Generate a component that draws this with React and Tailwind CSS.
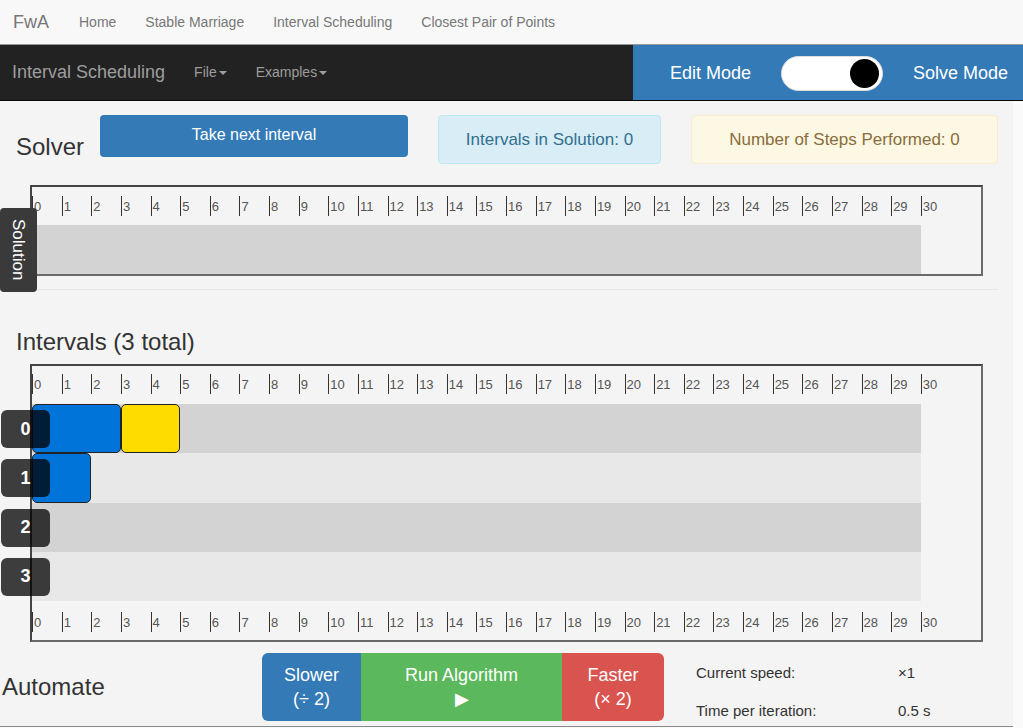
import React from "react";

const UNIT = 889 / 30;
const TICKS = Array.from({ length: 31 }, (_, i) => i);

// intervals per row: [start, end, colour]
const ROWS = [
  [
    [0, 3, "bg-[#0074d9]"],
    [3, 5, "bg-[#ffdc00]"],
  ],
  [[0, 2, "bg-[#0074d9]"]],
  [],
  [],
];

const Caret = () => (
  <span className="inline-block ml-[2px] align-middle w-0 h-0 border-l-[4px] border-r-[4px] border-t-[4px] border-l-transparent border-r-transparent border-t-[#9d9d9d]" />
);

const Ruler = ({ className }) => (
  <div className={`flex ${className}`}>
    {TICKS.map((t) => (
      <div key={t} className="w-[29.633px] shrink-0 flex items-center h-[20px] border-l border-[#333]">
        <span className="text-[13px] leading-none text-[#555] pl-[1px]">{t}</span>
      </div>
    ))}
  </div>
);

const App = () => {
  return (
    <div className="min-h-screen bg-[#fafafa] font-['Liberation_Sans',Arial,sans-serif] text-[#333]">
      {/* top nav */}
      <div className="h-[45px] bg-[#f8f8f8] border-b border-[#9a9a9a] flex items-center">
        <span className="pl-[13px] pr-[30px] text-[18px] text-[#777]">FwA</span>
        {["Home", "Stable Marriage", "Interval Scheduling", "Closest Pair of Points"].map((l) => (
          <span key={l} className="text-[14px] text-[#777] mr-[29px]">
            {l}
          </span>
        ))}
      </div>

      {/* dark app bar */}
      <div className="h-[56px] bg-[#222] border-b border-[#080808] flex">
        <div className="flex-1 flex items-center">
          <span className="pl-[12px] text-[18px] text-[#9d9d9d]">Interval Scheduling</span>
          <span className="ml-[29px] text-[14px] text-[#9d9d9d]">
            File
            <Caret />
          </span>
          <span className="ml-[29px] text-[14px] text-[#9d9d9d]">
            Examples
            <Caret />
          </span>
        </div>
        <div className="w-[390px] bg-[#337ab7] flex items-center text-white text-[18px] pt-[2px]">
          <span className="ml-[37px]">Edit Mode</span>
          <div className="ml-[30px] w-[102px] h-[35px] rounded-full bg-white border border-[#ddd] flex items-center justify-end pr-[3px]">
            <div className="w-[29px] h-[29px] rounded-full bg-black" />
          </div>
          <span className="ml-[30px]">Solve Mode</span>
        </div>
      </div>

      {/* main */}
      <div className="w-[1013px] bg-[#f4f4f4] border-b border-[#8a8a8a] pt-[14px] pb-[4px]">
        {/* solver */}
        <div className="flex items-start pl-[16px]">
          <h2 className="w-[67px] mt-[18px] text-[24px] leading-[28px] text-[#333]">Solver</h2>
          <button className="ml-[17px] w-[308px] h-[42px] rounded-[4px] bg-[#337ab7] text-white text-[16px] pb-[2px]">
            Take next interval
          </button>
          <div className="ml-[30px] w-[223px] h-[49px] rounded-[4px] bg-[#d9edf7] border border-[#bce8f1] text-[#31708f] text-[17px] flex items-center justify-center">
            Intervals in Solution: 0
          </div>
          <div className="ml-[30px] w-[307px] h-[49px] rounded-[4px] bg-[#fcf8e3] border border-[#faebcc] text-[#8a6d3b] text-[17px] flex items-center justify-center">
            Number of Steps Performed: 0
          </div>
        </div>

        <div className="relative mt-[21px]">
          <div className="ml-[30px] w-[953px] border-2 border-[#6a6a6a] border-t-[#444] border-l-[#444]">
            <Ruler className="h-[38px] pt-[9px]" />
            <div className="w-[889px] h-[49px] bg-[#d3d3d3]" />
          </div>
          <div className="absolute left-0 top-[23px] w-[37px] h-[84px] rounded-[4px] bg-[#3a3a3a] flex items-center justify-center">
            <span className="[writing-mode:vertical-rl] text-white text-[17px]">Solution</span>
          </div>
        </div>

        <div className="ml-[15px] mr-[15px] mt-[13px] border-t border-[#e8e8e8]" />

        {/* intervals */}
        <h2 className="pl-[16px] mt-[38px] text-[24px] leading-[28px] text-[#333]">Intervals (3 total)</h2>
        <div className="relative mt-[8px] ml-[30px] w-[953px] border-2 border-[#6a6a6a] border-t-[#444] border-l-[#444]">
          <Ruler className="h-[38px] pt-[8px]" />
          {ROWS.map((row, i) => (
            <div
              key={i}
              className={`relative w-[889px] h-[49.3px] ${i % 2 === 0 ? "bg-[#d3d3d3]" : "bg-[#e8e8e8]"}`}
            >
              {row.map(([s, e, c], j) => (
                <div
                  key={j}
                  className={`absolute top-0 h-full rounded-[5px] border border-[#222] ${c}`}
                  style={{ left: s * UNIT, width: (e - s) * UNIT }}
                />
              ))}
              <div className="absolute left-[-31px] top-[6px] w-[49px] h-[38px] rounded-[6px] bg-black/75 flex items-center justify-center text-white font-bold text-[18px]">
                {i}
              </div>
            </div>
          ))}
          <Ruler className="h-[39px] pt-[11px]" />
        </div>

        {/* automate */}
        <div className="flex items-start mt-[11px]">
          <h2 className="w-[262px] pl-[2px] mt-[20px] text-[24px] leading-[28px] text-[#333]">Automate</h2>
          <div className="flex h-[68px] rounded-[6px] overflow-hidden text-white text-[18px] leading-[24px]">
            <div className="w-[99px] bg-[#337ab7] flex flex-col items-center justify-center">
              <span>Slower</span>
              <span>(÷ 2)</span>
            </div>
            <div className="w-[201px] bg-[#5cb85c] flex flex-col items-center justify-center">
              <span>Run Algorithm</span>
              <span>▶</span>
            </div>
            <div className="w-[102px] bg-[#d9534f] flex flex-col items-center justify-center">
              <span>Faster</span>
              <span>(× 2)</span>
            </div>
          </div>
          <div className="ml-[32px] mt-[9px] text-[15px] text-[#333] grid grid-cols-[202px_auto] gap-y-[15px]">
            <span>Current speed:</span>
            <span>×1</span>
            <span>Time per iteration:</span>
            <span>0.5 s</span>
          </div>
        </div>
      </div>
    </div>
  );
};

export default App;
